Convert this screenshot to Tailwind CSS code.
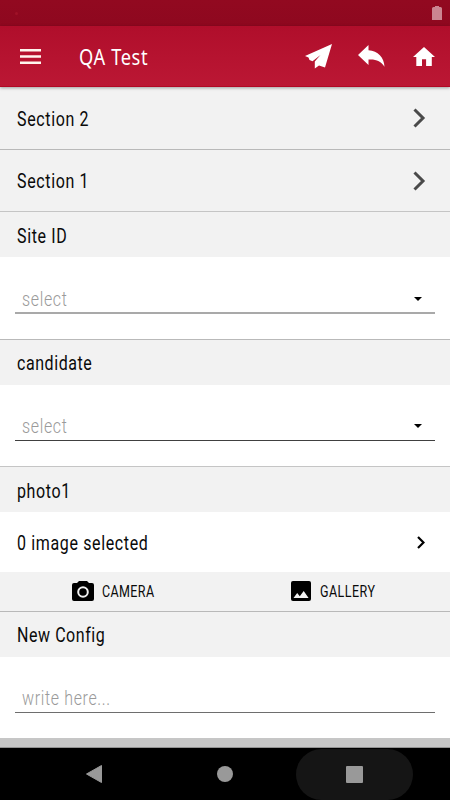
<!DOCTYPE html>
<html lang="en">
<head>
<meta charset="utf-8">
<title>QA Test</title>
<script src="https://cdn.jsdelivr.net/npm/@tailwindcss/browser@4"></script>
</head>
<body class="bg-white">
<div class="flex h-[800px] w-[450px] flex-col overflow-hidden bg-white font-[Roboto,sans-serif] text-[20px] leading-6 text-[#0a0a0a]">
  <div class="flex h-[26px] shrink-0 items-center justify-between bg-linear-to-b from-[#920920] to-[#8e081f] pr-2 pl-[15px]">
    <span class="size-[3px] rounded-full bg-[#a01228]"></span>
    <svg class="h-[14px] w-[10px]" viewBox="0 0 10 14" fill="#cb8591"><path d="M3 0h4v1h1.500Q10 1 10 2.500V14H0V2.500Q0 1 1.500 1H3z"/></svg>
  </div>
  <header class="relative z-10 flex h-[61px] shrink-0 items-center border-b border-[#b10824] bg-linear-to-b from-[#b00e2b] to-[#bb1734] pl-5 text-white shadow-[0_1px_3px_rgba(0,0,0,0.35)]">
    <svg class="h-[15px] w-[21px]" viewBox="0 0 21 15" fill="#fff5ee"><path d="M0 0h21v2.500H0zM0 6.200h21v2.500H0zM0 12.400h21v2.500H0z"/></svg>
    <h1 class="ml-[38px] w-[226px] pt-[2px] whitespace-nowrap"><span class="inline-block origin-left scale-x-[0.87] font-['Noto_Sans',sans-serif] text-[21px] tracking-[0.7px]">QA Test</span></h1>
    <svg class="h-[25px] w-[27px]" viewBox="0 0 27 25" fill="#fff"><path d="M27 0 0 12l3.500 1.600L4.500 16l3 1.200L15.500 11 9.800 17.500v7l4.200-3 6 2z"/></svg>
    <svg class="ml-[26px] h-[22px] w-[27px]" viewBox="0 0 27 22" fill="#fff"><path d="M10.500 0 0 10l10.500 10v-5.500C18 14 23 16 26.500 21.800 26 12 20 6 10.500 5.200z"/></svg>
    <svg class="ml-[28px] h-[19px] w-[22px]" viewBox="0 0 22 19" fill="#fff"><path d="M11 0 22 10h-3.200v9h-5.700v-6.700H9V19H3.300v-9H0z"/></svg>
  </header>

  <div class="flex h-[63px] shrink-0 items-center justify-between border-b border-[#b9b9b9] bg-[#f2f2f2] pr-6 pl-[17px]">
    <span class="origin-left scale-x-[0.8] pt-[2px] tracking-[0.8px]">Section 2</span>
    <svg class="h-5 w-[13px]" viewBox="0 0 13 20" fill="none" stroke="#4a4a4a" stroke-width="3"><path d="m1.500 1.500 8.500 8.500-8.500 8.500"/></svg>
  </div>
  <div class="flex h-[62px] shrink-0 items-center justify-between border-b border-[#c5c5c5] bg-[#f2f2f2] pr-6 pl-[17px]">
    <span class="origin-left scale-x-[0.8] tracking-[0.8px]">Section 1</span>
    <svg class="h-5 w-[13px]" viewBox="0 0 13 20" fill="none" stroke="#4a4a4a" stroke-width="3"><path d="m1.500 1.500 8.500 8.500-8.500 8.500"/></svg>
  </div>

  <div class="flex h-[45px] shrink-0 items-center bg-[#f2f2f2] pt-[2px] pl-[17px]"><span class="origin-left scale-x-[0.8] tracking-[0.8px]">Site ID</span></div>
  <div class="h-[83px] shrink-0 border-b border-[#b9b9b9] px-[15px] pt-[29px]">
    <div class="flex h-[28px] items-center justify-between border-b-2 border-[#a9a9a9] pr-[13px] pl-[7px]">
      <span class="origin-left scale-x-[0.8] font-light tracking-[0.8px] text-[#9a9a9a]">select</span>
      <svg class="h-1 w-2" viewBox="0 0 8 4"><path d="M0 0h8L4 4z"/></svg>
    </div>
  </div>

  <div class="flex h-[45px] shrink-0 items-center bg-[#f2f2f2] pl-[17px]"><span class="origin-left scale-x-[0.8] tracking-[0.7px]">candidate</span></div>
  <div class="h-[82px] shrink-0 border-b border-[#c5c5c5] px-[15px] pt-[28px]">
    <div class="flex h-[28px] items-center justify-between border-b border-[#404040] pr-[13px] pb-px pl-[7px]">
      <span class="origin-left scale-x-[0.8] font-light tracking-[0.8px] text-[#9a9a9a]">select</span>
      <svg class="h-1 w-2" viewBox="0 0 8 4"><path d="M0 0h8L4 4z"/></svg>
    </div>
  </div>

  <div class="flex h-[45px] shrink-0 items-center bg-[#f2f2f2] pt-[2px] pl-[17px]"><span class="origin-left scale-x-[0.8] tracking-[0.8px]">photo1</span></div>
  <div class="flex h-[60px] shrink-0 items-center justify-between pr-[25px] pl-[17px]">
    <span class="origin-left scale-x-[0.8] pt-[2px] tracking-[0.8px]">0 image selected</span>
    <svg class="h-[13px] w-[8px]" viewBox="0 0 8 13" fill="none" stroke="#000" stroke-width="2.200"><path d="m1 1 5.500 5.500L1 12"/></svg>
  </div>
  <div class="flex h-[40px] shrink-0 items-center border-b border-[#b9b9b9] bg-[#f2f2f2] text-[16px]">
    <div class="flex w-[219px] items-center pl-[72px]">
      <svg class="-mt-px h-5 w-[22px]" viewBox="0 0 22 20"><path d="M7 0h8l2 2h3q2 0 2 2v14q0 2-2 2H2q-2 0-2-2V4q0-2 2-2h3z"/><circle cx="11" cy="11" r="4.800" fill="none" stroke="#f2f2f2" stroke-width="2"/></svg>
      <span class="ml-2 origin-left scale-x-[0.78] pt-px tracking-[0.5px]">CAMERA</span>
    </div>
    <div class="flex items-center pl-[72px]">
      <svg class="-mt-px h-5 w-5" viewBox="0 0 20 20"><rect width="20" height="20" rx="2"/><path d="m2.500 17 3.700-5 2.600 3.200 3.900-5.200 4.900 7z" fill="#f2f2f2"/></svg>
      <span class="ml-[9px] origin-left scale-x-[0.78] pt-px tracking-[0.6px]">GALLERY</span>
    </div>
  </div>

  <div class="flex h-[45px] shrink-0 items-center bg-[#f2f2f2] pl-[17px]"><span class="origin-left scale-x-[0.8] tracking-[0.7px]">New Config</span></div>
  <div class="h-[81px] shrink-0 px-[15px] pt-[28px]">
    <div class="flex h-[28px] items-center border-b border-[#6e6e6e] pb-px pl-[7px]"><span class="origin-left scale-x-[0.8] font-light tracking-[0.8px] text-[#9a9a9a]">write here...</span></div>
  </div>
  <div class="h-[10px] shrink-0 border-b border-[#929292] bg-[#c6c6c6]"></div>
  <nav class="flex h-[52px] shrink-0 items-center bg-black">
    <svg class="ml-[86px] h-[18px] w-4" viewBox="0 0 16 18" fill="#999" stroke="#999" stroke-linejoin="round"><path d="M15.500.5v17L.5 9z"/></svg>
    <span class="ml-[115px] size-4 rounded-full bg-[#999]"></span>
    <span class="ml-[63px] flex h-[51px] w-[117px] items-center justify-center rounded-full bg-[#151515]"><span class="size-[17px] rounded-[1px] bg-[#999]"></span></span>
  </nav>
</div>
</body>
</html>
